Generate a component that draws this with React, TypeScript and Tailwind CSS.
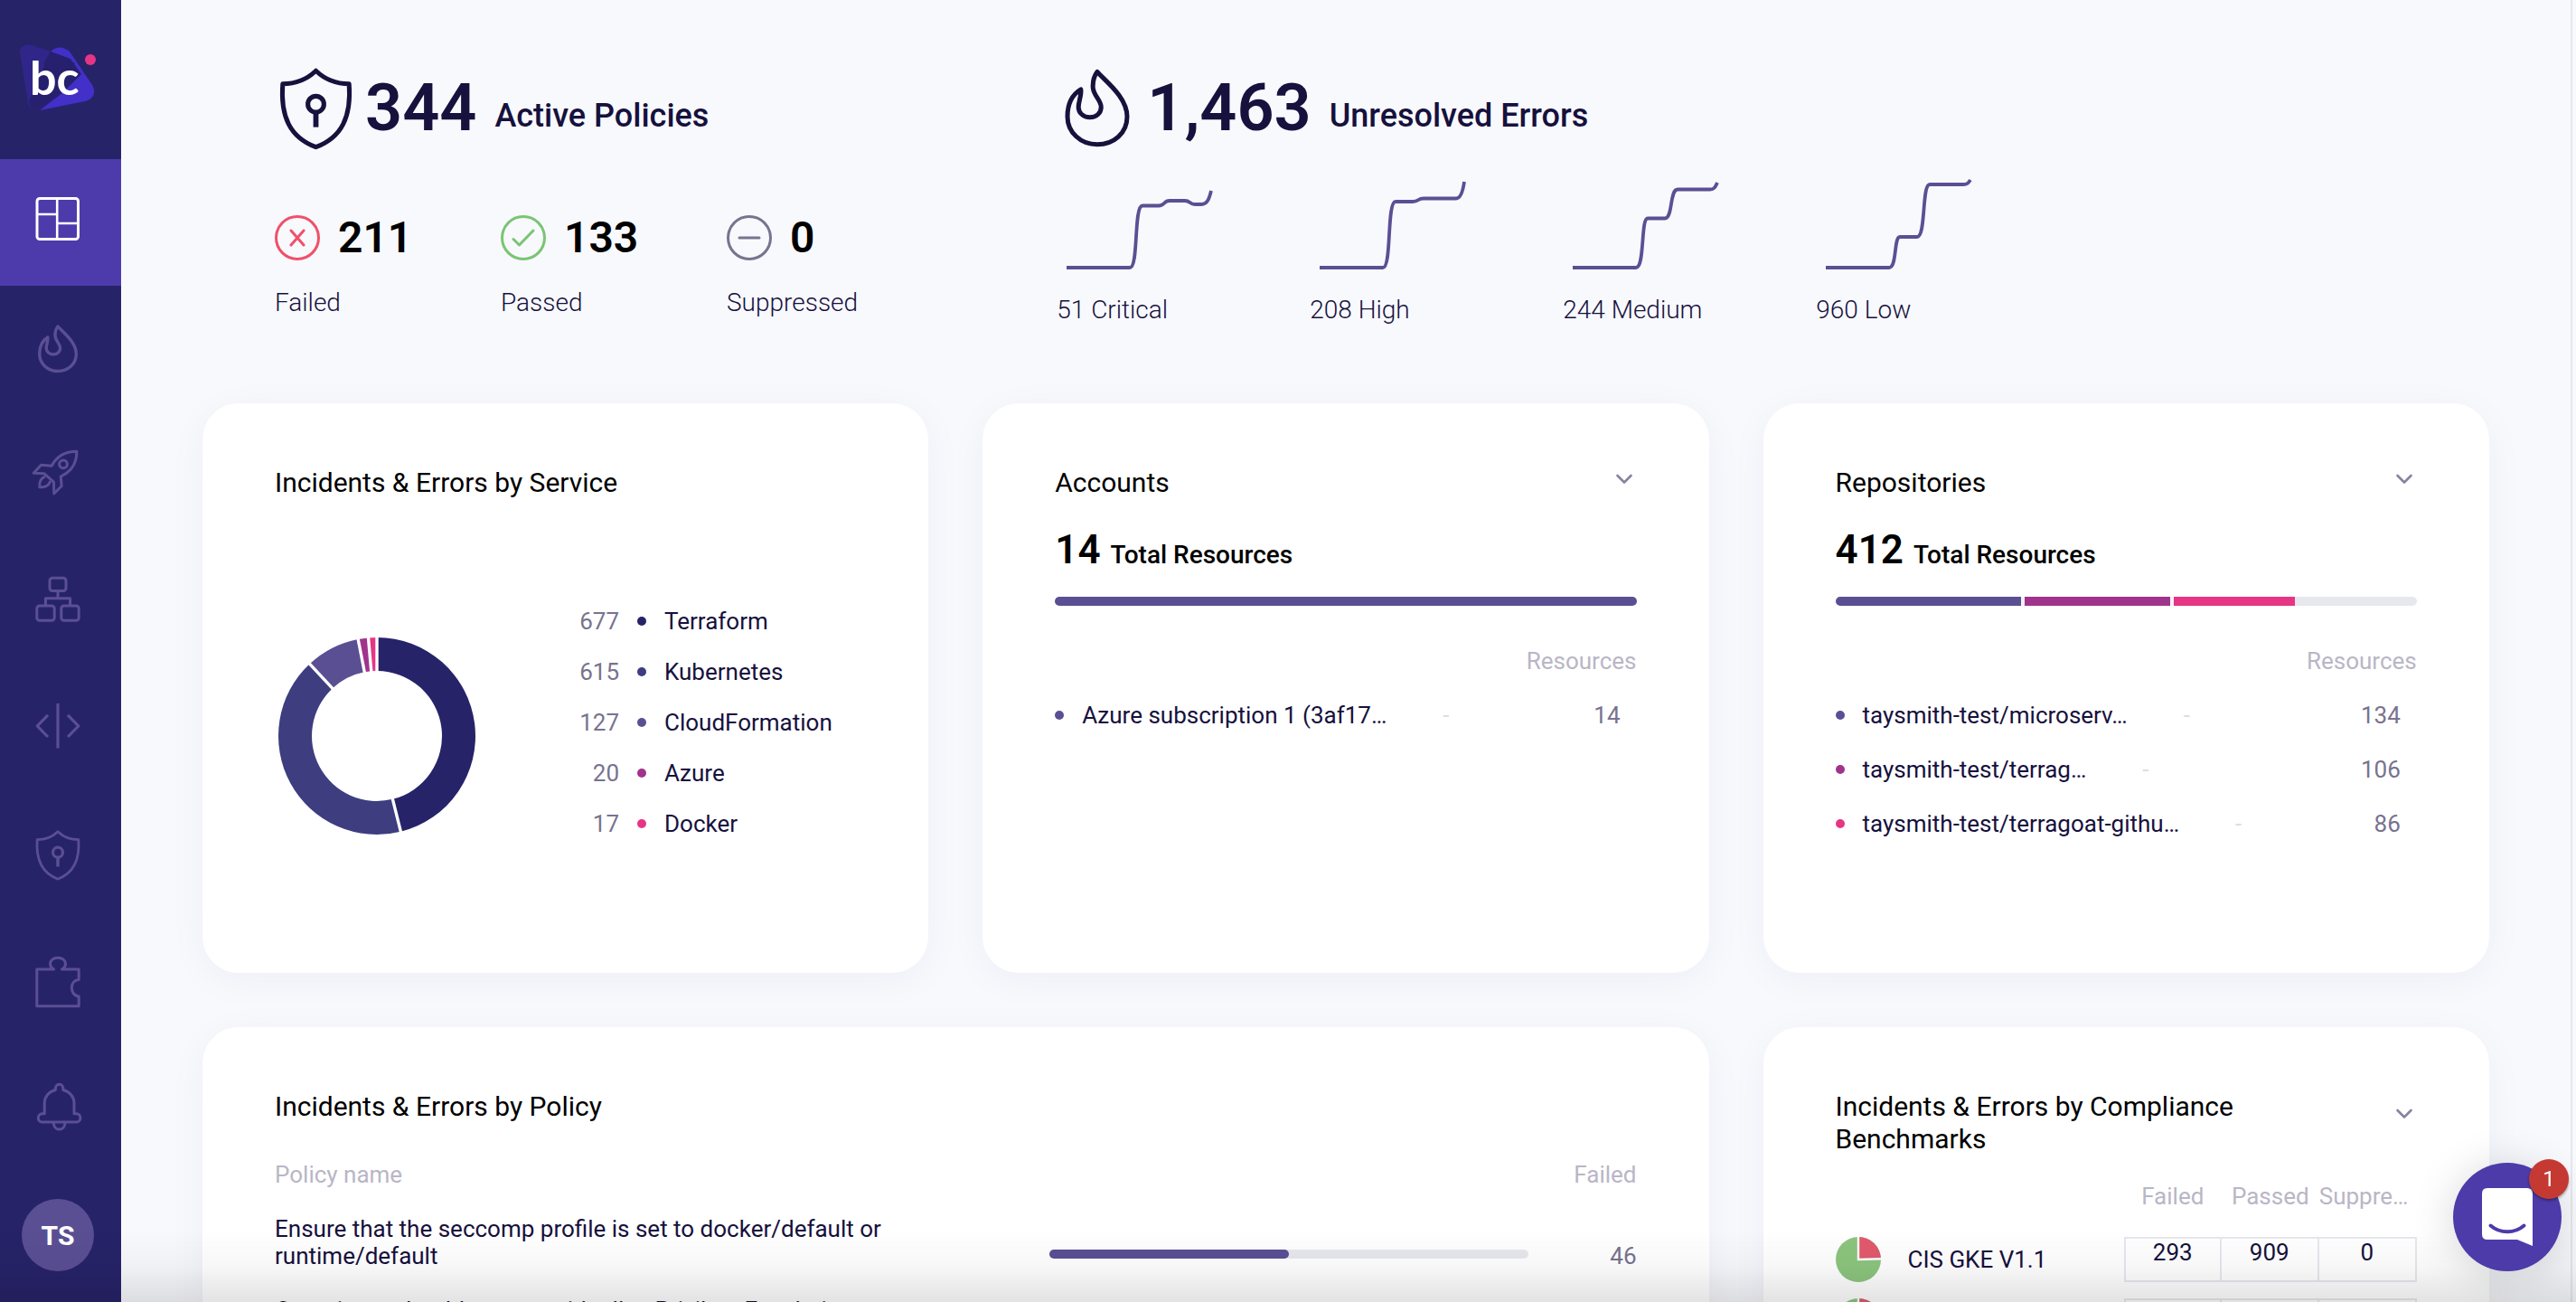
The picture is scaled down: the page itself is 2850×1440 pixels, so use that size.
import type { ReactNode } from "react";

type IconProps = { className?: string; strokeWidth?: number };

function IconFrame({ className = "size-16", strokeWidth = 3, children }: IconProps & { children: ReactNode }) {
  return (
    <svg
      viewBox="-32 -32 64 64"
      className={className}
      fill="none"
      stroke="currentColor"
      strokeWidth={strokeWidth}
      strokeLinejoin="round"
      aria-hidden="true"
    >
      {children}
    </svg>
  );
}

function DashboardIcon() {
  return (
    <IconFrame>
      <rect x="-23" y="-26.5" width="45.5" height="45" rx="3" />
      <path d="M-.8 -26.5V18.5M-23 -9H-.8M-.8 1H22.5" strokeWidth="2.6" />
    </IconFrame>
  );
}

function FlameIcon(props: IconProps) {
  return (
    <IconFrame strokeWidth={3.4} {...props}>
      <path d="M0 -25C5 -19 20.3 -8 20.3 5.5C20.3 17 11 24.5 0 24.5C-11.5 24.5 -20.3 16 -20.3 5.5C-20.3 -3 -17 -9.5 -11.2 -13C-10.6 -9 -12.8 -5 -12.8 -1C-12.8 3 -9.5 6 -5 6C-.5 6 2.6 3 2.6 -1C2.6 -6 -3 -9 -3 -15C-3 -19 -2 -22.5 0 -25Z" />
    </IconFrame>
  );
}

function RocketIcon() {
  return (
    <IconFrame>
      <path d="M20.8 -26.8C6 -26.8 -2 -20 -6.8 -10.8L-18.5 -11.8L-26.8 -2.8L-15 -2.2L-4.5 7.2L-4.3 20L4.2 11.5L3.2 1C13 -3.5 21.2 -12 20.8 -26.8Z" />
      <circle cx="6" cy="-12.7" r="4.4" />
      <path d="M-14 .8C-18 2.5 -21 7 -20.2 12.7C-14 13.5 -10 11 -8.2 6" />
    </IconFrame>
  );
}

function SitemapIcon() {
  return (
    <IconFrame>
      <rect x="-9" y="-26.7" width="18" height="14.3" rx="3" />
      <rect x="-23.2" y="4" width="19.4" height="16.2" rx="3" />
      <rect x="3.8" y="4" width="19.4" height="16.2" rx="3" />
      <path d="M0 -12.4V-4.2M-13.6 4V-4.2H13.6V4" />
    </IconFrame>
  );
}

function CodeIcon() {
  return (
    <IconFrame strokeWidth={3.2}>
      <path d="M0 -28V21.5M-11 -15.2L-22.8 -3L-11 9M11 -15.2L22.8 -3L11 9" />
    </IconFrame>
  );
}

function ShieldIcon(props: IconProps) {
  return (
    <IconFrame strokeWidth={2.8} {...props}>
      <path d="M0 -26.3C6 -20.5 13 -17.3 22.8 -17.3C24.5 5 18 19.5 0 26.2C-18 19.5 -24.5 5 -22.8 -17.3C-13 -17.3 -6 -20.5 0 -26.3Z" />
      <path d="M0 2.5V12.5" strokeWidth="3.6" />
      <circle cx="0" cy="-3.3" r="5.5" strokeWidth="3.2" />
    </IconFrame>
  );
}

function PuzzleIcon() {
  return (
    <IconFrame>
      <path d="M-23.2 -14H-4.5C-7 -15.5 -8.5 -17.5 -8.5 -19.8C-8.5 -24 -4.8 -26.8 0 -26.8S8.5 -24 8.5 -19.8C8.5 -17.5 7 -15.5 4.5 -14H23.2V-2.5C18 -2 15.3 2 15.3 6.5S18 15.5 23.2 16V26.8H-23.2Z" />
    </IconFrame>
  );
}

function BellIcon() {
  return (
    <IconFrame>
      <path d="M-2.6 -20.5C-3 -24.4 -1 -26.8 1.6 -26.8S6.2 -24.4 5.8 -20.5C13 -19 18 -13 18 -6V5.8H20.4C26.4 5.8 26.4 15 20.4 15H-17.2C-23.2 15 -23.2 5.8 -17.2 5.8H-14.8V-6C-14.8 -13 -9.8 -19 -2.6 -20.5Z" />
      <path d="M-4.8 15.5C-4.8 20 -2 23 1.6 23S8 20 8 15.5" />
    </IconFrame>
  );
}

function Logo() {
  return (
    <svg viewBox="0 0 120 100" className="h-[100px] w-[120px]" role="img" aria-label="bc">
      <path d="M12 18C12 11 18 9 25 10L46 17L38 30C50 50 45 65 32 81C26 82 22 79 21 73Z" fill="#30268a" />
      <path d="M46 17C52 11 60 11 67 17L92 54C97 63 93 70 84 72L34 82L64 54L73 30Z" fill="#4230c9" />
      <path d="M46 17L68 25L80 42L60 62L34 82C28 82 23 80 22 72L36 40Z" fill="#27206f" />
      <text x="23" y="65" fontFamily="Lato, sans-serif" fontWeight="700" fontSize="52" fill="#fff">bc</text>
      <circle cx="90" cy="26" r="6" fill="#e73585" />
    </svg>
  );
}

const navItems: { label: string; icon: ReactNode; active?: boolean }[] = [
  { label: "Dashboard", icon: <DashboardIcon />, active: true },
  { label: "Incidents", icon: <FlameIcon /> },
  { label: "Projects", icon: <RocketIcon /> },
  { label: "Resources", icon: <SitemapIcon /> },
  { label: "Code", icon: <CodeIcon /> },
  { label: "Policies", icon: <ShieldIcon /> },
  { label: "Integrations", icon: <PuzzleIcon /> },
  { label: "Notifications", icon: <BellIcon /> },
];

function Sidebar() {
  return (
    <aside className="flex w-[134px] shrink-0 flex-col bg-[#272369]">
      <a href="#home" className="flex h-[176px] shrink-0 items-start pt-10 pl-[10px]">
        <Logo />
      </a>
      <nav className="flex flex-col">
        {navItems.map((item) => (
          <a
            key={item.label}
            href="#nav"
            aria-label={item.label}
            className={
              item.active
                ? "flex h-[140px] items-center justify-center bg-[#4d3bac] pr-[6px] text-white"
                : "flex h-[140px] items-center justify-center pr-[6px] text-[#5b4f94]"
            }
          >
            {item.icon}
          </a>
        ))}
      </nav>
      <button
        type="button"
        className="mt-[30px] ml-6 flex size-20 shrink-0 items-center justify-center rounded-full bg-[#5b4f94] text-[30px] font-bold text-white"
      >
        TS
      </button>
    </aside>
  );
}

const stats = [
  { value: "211", label: "Failed", color: "#f0506a", mark: "M-7 -8L7 8M7 -8L-7 8" },
  { value: "133", label: "Passed", color: "#79c573", mark: "M-11 1.5L-4.5 8L11 -8" },
  { value: "0", label: "Suppressed", color: "#77738f", mark: "M-11 0H11" },
];

const trends = [
  { label: "51 Critical", d: "M0 96H70C80 96 74 27.5 84 27.5H102C109 27.5 107 22 114 22H131C137 22 136 26 142 26H149C156 26 158 19 160 11" },
  { label: "208 High", d: "M0 96H70C80 96 74 23 84 23H103C110 23 108 19.5 115 19.5H151C157 19.5 159 8 160 1" },
  { label: "244 Medium", d: "M0 96H70C80 96 75 41.5 83 41.5H102C111 41.5 107 9.5 116 9.5H152C157 9.5 158 6 160 2" },
  { label: "960 Low", d: "M0 96H70C79 96 75 62 82 62H101C111 62 106 4 115 4H152C157 4 158 2 160 -1" },
];

function Heading({ icon, value, label }: { icon: ReactNode; value: string; label: string }) {
  return (
    <div className="flex h-[90px] items-center text-[#16113d]">
      <span className="flex w-[90px] shrink-0 justify-center">{icon}</span>
      <span className="ml-[10px] text-[72px] leading-[90px] font-semibold">{value}</span>
      <span className="ml-5 pt-4 text-[36px] leading-[44px] font-medium">{label}</span>
    </div>
  );
}

function Summary() {
  return (
    <section className="grid grid-cols-3 gap-x-[60px] pt-[75px] pb-[85px]">
      <div className="pl-20">
        <Heading icon={<ShieldIcon className="size-[103px] shrink-0" strokeWidth={3.1} />} value="344" label="Active Policies" />
        <div className="mt-[73px] flex">
          {stats.map((s) => (
            <div key={s.label} className="w-[250px] shrink-0">
              <div className="flex h-[50px] items-center gap-5">
                <svg viewBox="-25 -25 50 50" className="size-[50px]" fill="none" stroke={s.color} strokeWidth="3" strokeLinecap="round" strokeLinejoin="round" aria-hidden="true">
                  <circle r="23.5" />
                  <path d={s.mark} />
                </svg>
                <span className="text-[48px] leading-[50px] font-semibold text-black">{s.value}</span>
              </div>
              <div className="mt-[29px] text-[28px] leading-9 font-light text-[#16113d]">{s.label}</div>
            </div>
          ))}
        </div>
      </div>
      <div className="col-span-2 pl-[82px]">
        <Heading icon={<FlameIcon className="size-[104px] shrink-0" strokeWidth={3.1} />} value="1,463" label="Unresolved Errors" />
        <div className="mt-[31px] flex">
          {trends.map((t) => (
            <div key={t.label} className="w-[280px] shrink-0">
              <svg viewBox="0 -4 164 104" className="ml-[11px] h-[104px] w-[164px]" fill="none" stroke="#5b4f94" strokeWidth="3.8" aria-hidden="true">
                <path d={t.d} />
              </svg>
              <div className="mt-[25px] text-[28px] leading-9 font-light text-[#16113d]">{t.label}</div>
            </div>
          ))}
        </div>
      </div>
    </section>
  );
}

function Card({ className = "", children }: { className?: string; children: ReactNode }) {
  return (
    <section className={`rounded-[40px] bg-white px-20 pt-[70px] shadow-[0_8px_44px_rgba(30,30,80,0.045)] ${className}`}>
      {children}
    </section>
  );
}

function Title({ children }: { children: ReactNode }) {
  return <h2 className="max-w-[480px] text-[30px] leading-9 font-normal text-black">{children}</h2>;
}

function Chevron({ label }: { label: string }) {
  return (
    <button type="button" aria-label={label} className="mr-1 flex h-7 w-5 items-center justify-center text-[#8783a0]">
      <svg viewBox="0 0 20 12" className="h-3 w-5" fill="none" stroke="currentColor" strokeWidth="2.6" strokeLinecap="round" strokeLinejoin="round" aria-hidden="true">
        <path d="M2.5 2L10 9.5L17.5 2" />
      </svg>
    </button>
  );
}

// Sweeps are in degrees; small slices are kept wide enough to stay visible.
const services = [
  { count: 677, name: "Terraform", color: "#272369", sweep: 166 },
  { count: 615, name: "Kubernetes", color: "#3d3d80", sweep: 151 },
  { count: 127, name: "CloudFormation", color: "#5b4f94", sweep: 32 },
  { count: 20, name: "Azure", color: "#a0348c", sweep: 6 },
  { count: 17, name: "Docker", color: "#e73585", sweep: 5 },
];

function Donut() {
  const point = (degrees: number, radius: number) => {
    const angle = (degrees * Math.PI) / 180;
    return `${Math.sin(angle) * radius} ${-Math.cos(angle) * radius}`;
  };
  let start = 0;
  const slices = services.map((s) => {
    const from = start;
    const to = from + s.sweep;
    start = to;
    return {
      ...s,
      from,
      d: `M${point(from, 109)}A109 109 0 0 1 ${point(to, 109)}L${point(to, 72)}A72 72 0 0 0 ${point(from, 72)}Z`,
    };
  });
  return (
    <svg viewBox="-113 -110 226 220" className="mt-[152px] h-[220px] w-[226px] shrink-0" role="img" aria-label="Share by service">
      {slices.map((s) => (
        <path key={s.name} d={s.d} fill={s.color} />
      ))}
      {slices.map((s) => (
        <path key={s.name} d={`M${point(s.from, 70)}L${point(s.from, 111)}`} stroke="#fff" strokeWidth="3.4" />
      ))}
    </svg>
  );
}

function ServiceCard() {
  return (
    <Card className="min-h-[630px]">
      <Title>Incidents &amp; Errors by Service</Title>
      <div className="flex items-start">
        <Donut />
        <ul className="mt-[107px] text-[26px]">
          {services.map((s) => (
            <li key={s.name} className="flex h-14 items-center">
              <span className="w-[155px] text-right text-[#77738f]">{s.count}</span>
              <span className="mx-5 size-[10px] rounded-full" style={{ backgroundColor: s.color }} />
              <span className="text-[#16113d]">{s.name}</span>
            </li>
          ))}
        </ul>
      </div>
    </Card>
  );
}

type Resource = { name: string; count: number; color: string };

function ResourceCard({ title, total, items }: { title: string; total: number; items: Resource[] }) {
  return (
    <Card className="min-h-[630px]">
      <div className="flex items-start justify-between">
        <Title>{title}</Title>
        <Chevron label={`Expand ${title}`} />
      </div>
      <div className="mt-[30px] flex items-baseline gap-[11px] font-medium text-black">
        <span className="text-[44px] leading-[52px] font-semibold">{total}</span>
        <span className="text-[28px] leading-8">Total Resources</span>
      </div>
      <div className="mt-[26px] flex h-[10px] overflow-hidden rounded-[5px] bg-[#e7e8ee]">
        {items.map((r, i) => (
          <div key={r.name} className="flex" style={{ width: `${(r.count / total) * 100}%` }}>
            <div className="grow" style={{ backgroundColor: r.color }} />
            {i < items.length - 1 && <div className="w-1 bg-white/50" />}
          </div>
        ))}
      </div>
      <div className="mt-[46px] text-right text-[26px] leading-[30px] text-[#b9b6c6]">Resources</div>
      <ul className="mt-[15px] text-[26px]">
        {items.map((r) => (
          <li key={r.name} className="flex h-[60px] items-center">
            <span className="size-[10px] rounded-full" style={{ backgroundColor: r.color }} />
            <span className="ml-5 text-[#16113d]">{r.name}</span>
            <span className="ml-[62px] text-[#dddde2]">-</span>
            <span className="mr-[18px] ml-auto text-[#77738f]">{r.count}</span>
          </li>
        ))}
      </ul>
    </Card>
  );
}

const policies: { name: string; failed: number; share: number }[] = [
  { name: "Ensure that the seccomp profile is set to docker/default or runtime/default", failed: 46, share: 50 },
];

function PolicyCard() {
  return (
    <Card className="col-span-2">
      <Title>Incidents &amp; Errors by Policy</Title>
      <table className="mt-[42px] w-full table-fixed text-[26px] leading-[30px]">
        <thead>
          <tr className="text-[#b9b6c6]">
            <th className="text-left font-normal">Policy name</th>
            <th className="w-[530px]" aria-label="Share" />
            <th className="w-[120px] text-right font-normal">Failed</th>
          </tr>
        </thead>
        <tbody>
          {policies.map((p) => (
            <tr key={p.name} className="align-bottom">
              <td className="pt-[30px] text-[#16113d]">
                <div className="max-w-[720px]">{p.name}</div>
              </td>
              <td className="pb-3">
                <div className="h-[10px] rounded-[5px] bg-[#e7e8ee]">
                  <div className="h-full rounded-[5px] bg-[#5b4f94]" style={{ width: `${p.share}%` }} />
                </div>
              </td>
              <td className="text-right text-[#77738f]">{p.failed}</td>
            </tr>
          ))}
          <tr>
            <td className="pt-[30px] text-[#16113d]">
              <div className="max-w-[720px]">Containers should not run with allowPrivilegeEscalation</div>
            </td>
            <td />
            <td />
          </tr>
        </tbody>
      </table>
    </Card>
  );
}

function Pie() {
  return (
    <svg viewBox="-25 -25 50 50" className="size-[50px] shrink-0" aria-hidden="true">
      <circle r="25" fill="#8cc57e" />
      <path d="M0 0V-25A25 25 0 0 1 25 -1Z" fill="#e15a6d" />
      <path d="M0 -25V0L25 -.8" fill="none" stroke="#fff" strokeWidth="2.4" />
    </svg>
  );
}

const benchmarks = [
  { name: "CIS GKE V1.1", values: ["293", "909", "0"] },
  { name: "", values: ["", "", ""] },
];

function ComplianceCard() {
  return (
    <Card>
      <div className="flex items-start justify-between">
        <Title>Incidents &amp; Errors by Compliance Benchmarks</Title>
        <div className="pt-3">
          <Chevron label="Expand compliance benchmarks" />
        </div>
      </div>
      <table className="mt-3 w-full table-fixed border-separate border-spacing-x-0 border-spacing-y-[18px] text-[26px] leading-[30px]">
        <thead>
          <tr className="text-[#b9b6c6]">
            <th aria-label="Benchmark" />
            <th className="w-[108px] pb-3 font-normal">Failed</th>
            <th className="w-[108px] pb-3 font-normal">Passed</th>
            <th className="w-[108px] pb-3 text-left font-normal">Suppre…</th>
          </tr>
        </thead>
        <tbody>
          {benchmarks.map((b, row) => (
            <tr key={row}>
              <td className="h-[50px] p-0">
                <div className="flex items-center gap-[30px] text-[#16113d]">
                  <Pie />
                  {b.name}
                </div>
              </td>
              {b.values.map((v, i) => (
                <td
                  key={i}
                  className={
                    i === 0
                      ? "border-2 border-[#e7e8ee] p-0 text-center align-top text-[#16113d]"
                      : "border-y-2 border-r-2 border-[#e7e8ee] p-0 text-center align-top text-[#16113d]"
                  }
                >
                  {v}
                </td>
              ))}
            </tr>
          ))}
        </tbody>
      </table>
    </Card>
  );
}

function ChatLauncher() {
  return (
    <div className="fixed right-4 bottom-[34px]">
      <button
        type="button"
        aria-label="Open chat"
        className="flex size-[120px] items-center justify-center rounded-full bg-[#4c3ba9] shadow-[0_4px_48px_rgba(0,0,0,0.16)]"
      >
        <svg viewBox="0 0 56 64" className="h-16 w-14" aria-hidden="true">
          <path d="M6 0H50Q56 0 56 6V64L39 57H6Q0 57 0 51V6Q0 0 6 0Z" fill="#fff" />
          <path d="M9.500 41.500C20 50.500 36 50.500 46.500 41.500" fill="none" stroke="#4c3ba9" strokeWidth="4" strokeLinecap="round" />
        </svg>
      </button>
      <span className="absolute -top-1 -right-2 flex size-11 items-center justify-center rounded-full bg-[#c43a33] text-[24px] text-white shadow-[0_2px_3px_rgba(0,0,0,0.35)]">
        1
      </span>
    </div>
  );
}

export default function App() {
  return (
    <div className="flex h-screen overflow-hidden bg-[#f8f9fd] [font-family:Roboto,sans-serif]">
      <Sidebar />
      <main className="mr-1 min-w-0 grow overflow-hidden border-r-2 border-[#e6e7ec] px-[90px]">
        <Summary />
        <div className="grid grid-cols-3 gap-[60px]">
          <ServiceCard />
          <ResourceCard
            title="Accounts"
            total={14}
            items={[{ name: "Azure subscription 1 (3af17…", count: 14, color: "#5b4f94" }]}
          />
          <ResourceCard
            title="Repositories"
            total={412}
            items={[
              { name: "taysmith-test/microserv…", count: 134, color: "#5b4f94" },
              { name: "taysmith-test/terrag…", count: 106, color: "#a0348c" },
              { name: "taysmith-test/terragoat-githu…", count: 86, color: "#e73585" },
            ]}
          />
          <PolicyCard />
          <ComplianceCard />
        </div>
      </main>
      <div className="pointer-events-none fixed inset-x-0 bottom-0 h-20 bg-linear-to-b from-black/0 via-black/3 to-black/11" />
      <ChatLauncher />
    </div>
  );
}
